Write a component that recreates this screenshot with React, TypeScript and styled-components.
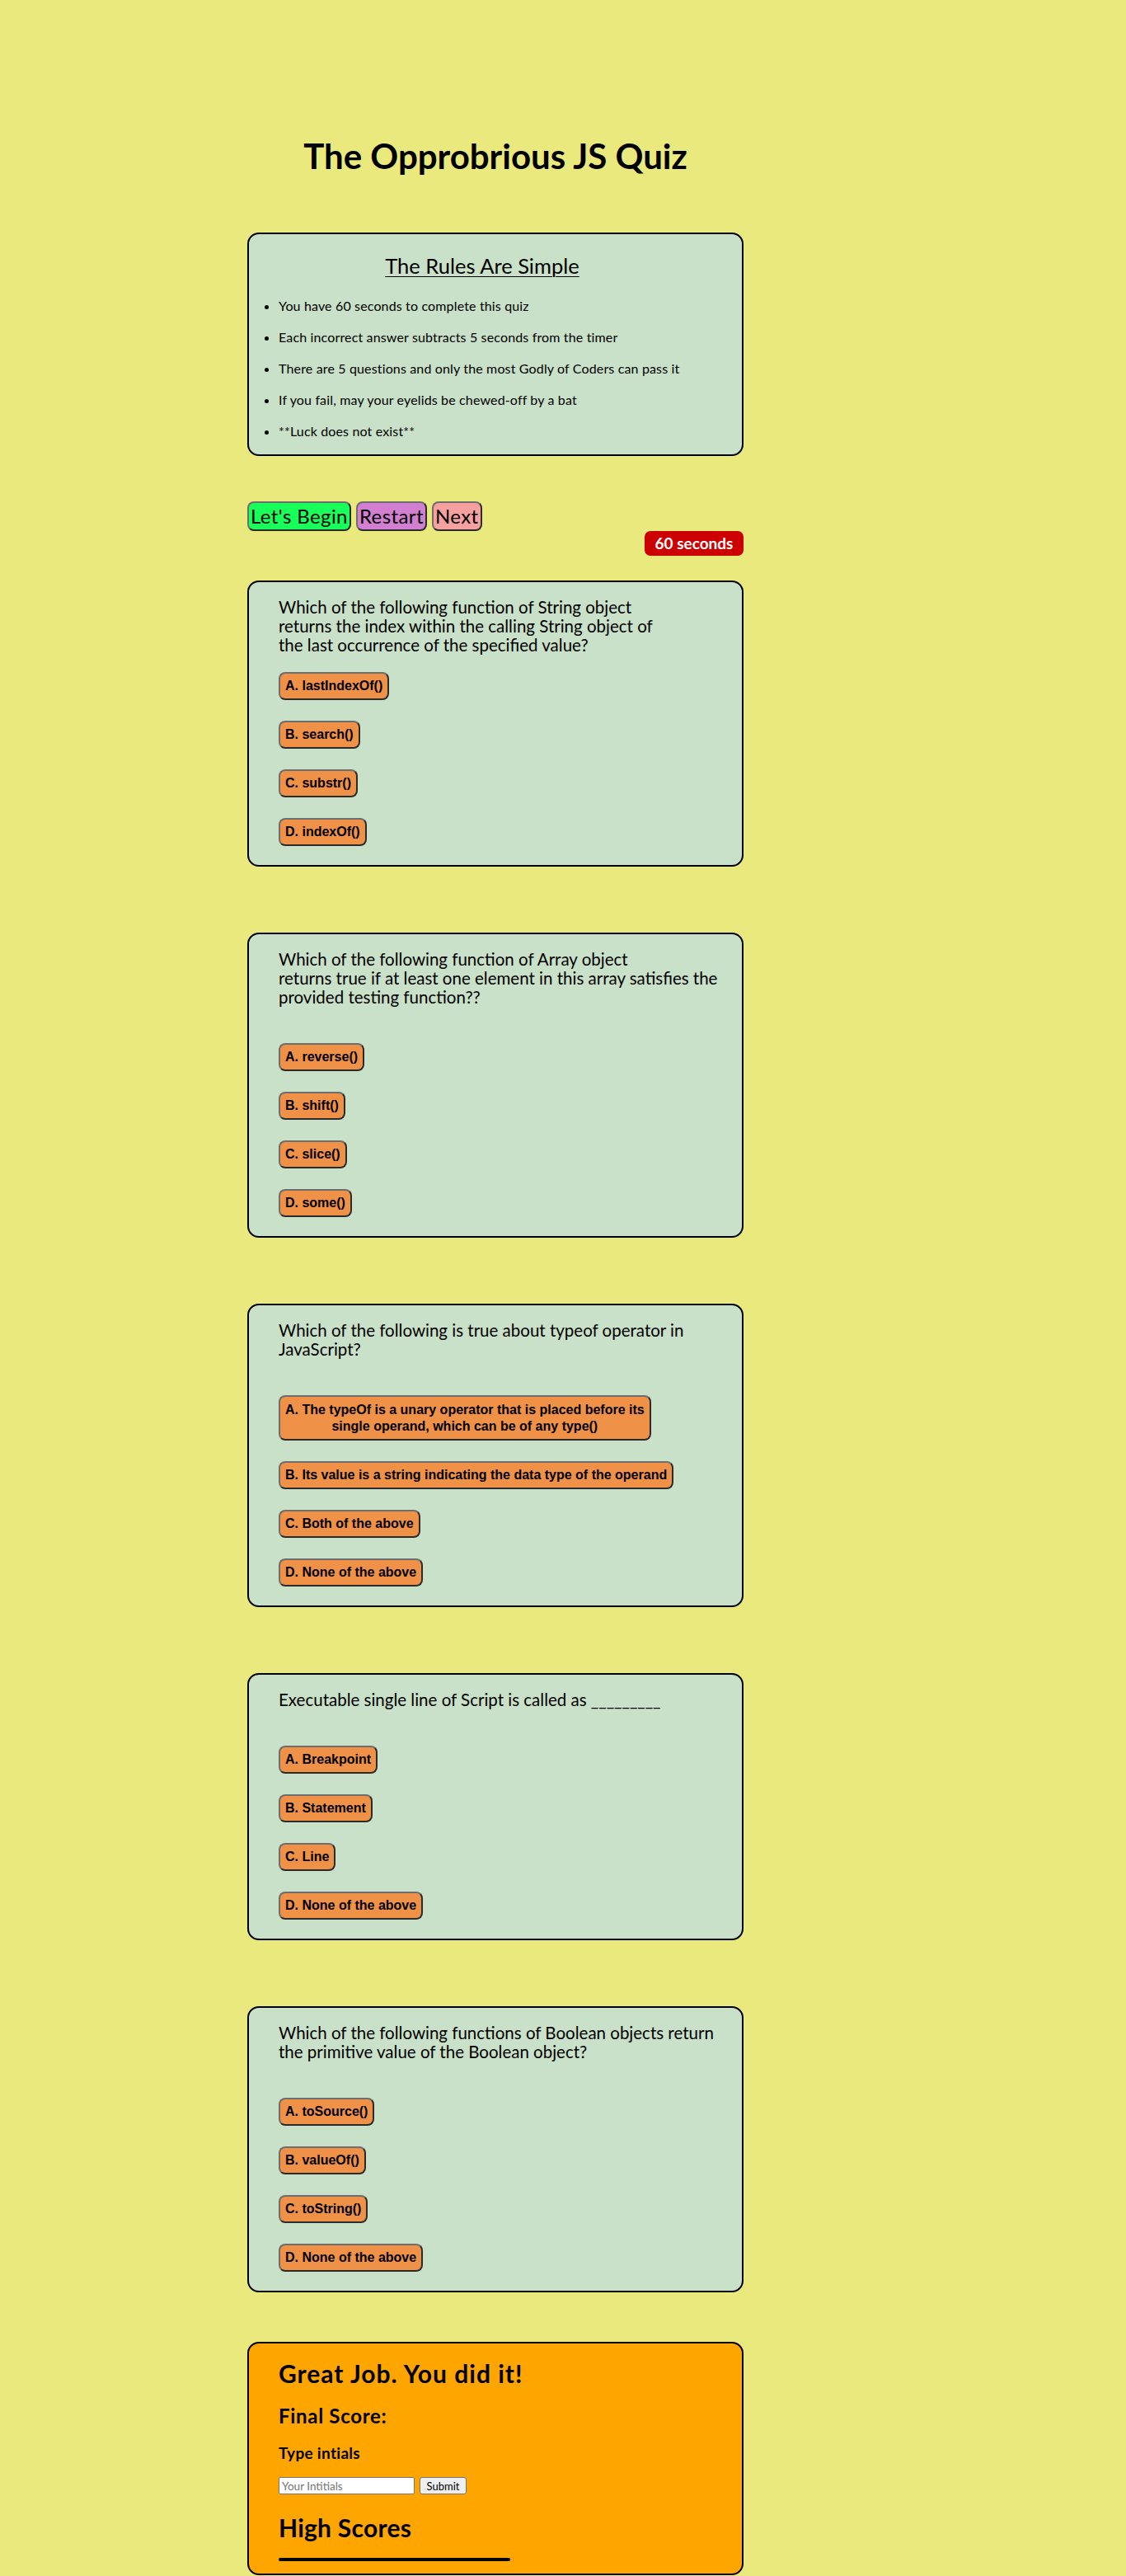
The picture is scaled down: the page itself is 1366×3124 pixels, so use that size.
import React from "react";
import styled, { createGlobalStyle } from "styled-components";

const GlobalStyle = createGlobalStyle`
  html, body {
    margin: 0;
    padding: 0;
    background-color: #eae97d;
  }
  body {
    font-family: Lato, "Open Sans", sans-serif;
    color: #000;
  }
`;

const Page = styled.main`
  width: 602px;
  padding-left: 300px;
  padding-top: 164px;
`;

const Title = styled.h1`
  margin: 0 0 68px;
  font-size: 42px;
  line-height: 50px;
  font-weight: 700;
  text-align: center;
`;

const Card = styled.section<{ $bg?: string }>`
  box-sizing: border-box;
  width: 602px;
  border: 2px solid #000;
  border-radius: 14px;
  background-color: ${(p) => p.$bg || "#c9e1c8"};
`;

const RulesCard = styled(Card)`
  padding: 22px 32px 0 0;
`;

const RulesHeading = styled.h2`
  margin: 0;
  font-size: 25.5px;
  line-height: 32px;
  font-weight: 400;
  text-align: center;
  text-decoration: underline;
  text-underline-offset: 3px;
  text-decoration-thickness: 1px;
`;

const RulesList = styled.ul`
  margin: 23px 0 0;
  padding-left: 36px;
`;

const Rule = styled.li`
  font-size: 16px;
  line-height: 20px;
  letter-spacing: 0.15px;
  margin-bottom: 18px;
`;

const Controls = styled.div`
  display: flex;
  gap: 6px;
  margin-top: 55px;
`;

const ControlButton = styled.button<{ $color: string }>`
  font-family: Lato, "Open Sans", sans-serif;
  font-size: 24px;
  line-height: 28px;
  letter-spacing: 0.4px;
  padding: 2px 2px;
  color: #000;
  background-color: ${(p) => p.$color};
  border: 2px solid;
  border-color: #6e6e6e #2b2b2b #2b2b2b #6e6e6e;
  border-radius: 8px;
  cursor: pointer;
`;

const TimerRow = styled.div`
  display: flex;
  justify-content: flex-end;
  margin-bottom: 30px;
`;

const Timer = styled.span`
  display: inline-block;
  width: 120px;
  height: 30px;
  line-height: 30px;
  text-align: center;
  background-color: #cc0000;
  color: #fff;
  font-weight: 700;
  font-size: 19px;
  border-radius: 7px;
`;

const QuestionCard = styled(Card)`
  padding: 19px 0 23px 36px;
  margin-bottom: 80px;
`;

const QuestionText = styled.p<{ $spaced?: boolean }>`
  margin: 0 0 ${(p) => (p.$spaced ? "44px" : "21px")};
  font-size: 20.5px;
  line-height: 23px;
  white-space: nowrap;
`;

const Answers = styled.div`
  display: flex;
  flex-direction: column;
  align-items: flex-start;
  gap: 25px;
`;

const AnswerButton = styled.button<{ $multi?: boolean }>`
  font-family: "Liberation Sans", Arial, sans-serif;
  font-weight: 700;
  font-size: 16px;
  line-height: ${(p) => (p.$multi ? "19.5px" : "normal")};
  padding: 6px 6px;
  color: #000;
  background-color: #ef9147;
  border: 2px solid;
  border-color: #6e6e6e #2b2b2b #2b2b2b #6e6e6e;
  border-radius: 8px;
  cursor: pointer;
`;

const ResultCard = styled(Card)`
  padding: 19px 0 15px 36px;
  margin-top: -20px;
`;

const ResultTitle = styled.h2`
  margin: 0;
  font-size: 30px;
  line-height: 34px;
  font-weight: 700;
  letter-spacing: 1px;
`;

const ScoreLine = styled.h3`
  margin: 20px 0 0;
  font-size: 24px;
  line-height: 29px;
  font-weight: 700;
  letter-spacing: 0.7px;
`;

const Prompt = styled.h4`
  margin: 19px 0 0;
  font-size: 19px;
  line-height: 23px;
  font-weight: 700;
  letter-spacing: 0.3px;
`;

const InitialsForm = styled.form`
  display: flex;
  gap: 6px;
  margin-top: 18px;
`;

const InitialsInput = styled.input`
  box-sizing: border-box;
  width: 165px;
  height: 21px;
  padding: 1px 3px;
  font-family: Lato, "Open Sans", sans-serif;
  font-size: 13.5px;
  border: 1px solid #767676;
  border-radius: 2px;
  background: #fff;
  &::placeholder {
    color: #757575;
  }
`;

const SubmitButton = styled.button`
  box-sizing: border-box;
  width: 57px;
  height: 21px;
  padding: 0 6px;
  font-family: Lato, "Open Sans", sans-serif;
  font-size: 13px;
  color: #000;
  background: #efefef;
  border: 1px solid #767676;
  border-radius: 3px;
`;

const HighScores = styled.h2`
  margin: 23px 0 0;
  font-size: 30px;
  line-height: 34px;
  font-weight: 700;
  letter-spacing: 0.25px;
`;

const Divider = styled.div`
  width: 281px;
  height: 4px;
  margin-top: 20px;
  background: #000;
  border-radius: 2px;
`;

type Question = {
  lines: string[];
  answers: string[][];
  spaced?: boolean;
};

const questions: Question[] = [
  {
    lines: [
      "Which of the following function of String object",
      "returns the index within the calling String object of",
      "the last occurrence of the specified value?",
    ],
    answers: [["A. lastIndexOf()"], ["B. search()"], ["C. substr()"], ["D. indexOf()"]],
  },
  {
    lines: [
      "Which of the following function of Array object",
      "returns true if at least one element in this array satisfies the",
      "provided testing function??",
    ],
    answers: [["A. reverse()"], ["B. shift()"], ["C. slice()"], ["D. some()"]],
    spaced: true,
  },
  {
    lines: ["Which of the following is true about typeof operator in", "JavaScript?"],
    answers: [
      [
        "A. The typeOf is a unary operator that is placed before its",
        "single operand, which can be of any type()",
      ],
      ["B. Its value is a string indicating the data type of the operand"],
      ["C. Both of the above"],
      ["D. None of the above"],
    ],
    spaced: true,
  },
  {
    lines: ["Executable single line of Script is called as _________"],
    answers: [["A. Breakpoint"], ["B. Statement"], ["C. Line"], ["D. None of the above"]],
    spaced: true,
  },
  {
    lines: [
      "Which of the following functions of Boolean objects return",
      "the primitive value of the Boolean object?",
    ],
    answers: [["A. toSource()"], ["B. valueOf()"], ["C. toString()"], ["D. None of the above"]],
    spaced: true,
  },
];

const rules = [
  "You have 60 seconds to complete this quiz",
  "Each incorrect answer subtracts 5 seconds from the timer",
  "There are 5 questions and only the most Godly of Coders can pass it",
  "If you fail, may your eyelids be chewed-off by a bat",
  "**Luck does not exist**",
];

const withBreaks = (lines: string[]) =>
  lines.map((line, i) => (
    <React.Fragment key={i}>
      {i > 0 && <br />}
      {line}
    </React.Fragment>
  ));

export default function App() {
  return (
    <>
      <GlobalStyle />
      <Page>
        <Title>The Opprobrious JS Quiz</Title>

        <RulesCard>
          <RulesHeading>The Rules Are Simple</RulesHeading>
          <RulesList>
            {rules.map((r) => (
              <Rule key={r}>{r}</Rule>
            ))}
          </RulesList>
        </RulesCard>

        <Controls>
          <ControlButton $color="#17ff58">Let's Begin</ControlButton>
          <ControlButton $color="#d37fd1">Restart</ControlButton>
          <ControlButton $color="#f6a1a0">Next</ControlButton>
        </Controls>
        <TimerRow>
          <Timer>60 seconds</Timer>
        </TimerRow>

        {questions.map((q, i) => (
          <QuestionCard key={i}>
            <QuestionText $spaced={q.spaced}>{withBreaks(q.lines)}</QuestionText>
            <Answers>
              {q.answers.map((a) => (
                <AnswerButton key={a[0]} $multi={a.length > 1}>
                  {withBreaks(a)}
                </AnswerButton>
              ))}
            </Answers>
          </QuestionCard>
        ))}

        <ResultCard $bg="#ffa500">
          <ResultTitle>Great Job. You did it!</ResultTitle>
          <ScoreLine>Final Score:</ScoreLine>
          <Prompt>Type intials</Prompt>
          <InitialsForm onSubmit={(e) => e.preventDefault()}>
            <InitialsInput type="text" placeholder="Your Intitials" />
            <SubmitButton type="submit">Submit</SubmitButton>
          </InitialsForm>
          <HighScores>High Scores</HighScores>
          <Divider />
        </ResultCard>
      </Page>
    </>
  );
}
